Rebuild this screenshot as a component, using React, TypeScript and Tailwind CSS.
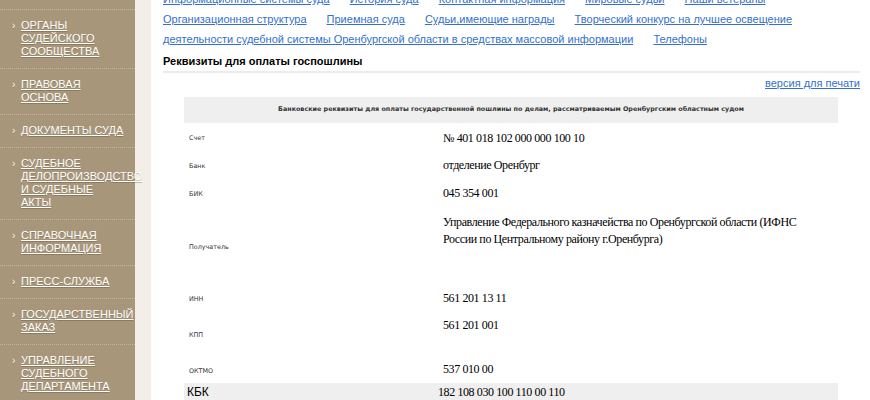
import React from "react"

// Left menu sections
const menu: string[][] = [
  ["ОРГАНЫ", "СУДЕЙСКОГО", "СООБЩЕСТВА"],
  ["ПРАВОВАЯ", "ОСНОВА"],
  ["ДОКУМЕНТЫ СУДА"],
  ["СУДЕБНОЕ", "ДЕЛОПРОИЗВОДСТВО", "И СУДЕБНЫЕ", "АКТЫ"],
  ["СПРАВОЧНАЯ", "ИНФОРМАЦИЯ"],
  ["ПРЕСС-СЛУЖБА"],
  ["ГОСУДАРСТВЕННЫЙ", "ЗАКАЗ"],
  ["УПРАВЛЕНИЕ", "СУДЕБНОГО", "ДЕПАРТАМЕНТА"],
]

const navLinks = [
  "Информационные системы суда",
  "История суда",
  "Контактная информация",
  "Мировые судьи",
  "Наши ветераны",
  "Организационная структура",
  "Приемная суда",
  "Судьи,имеющие награды",
  "Творческий конкурс на лучшее освещение деятельности судебной системы Оренбургской области в средствах массовой информации",
  "Телефоны",
]

interface Row {
  label: string
  value: string
  h: string
  pt: string
}

const rows: Row[] = [
  { label: "Счет", value: "№ 401 018 102 000 000 100 10", h: "h-[28px]", pt: "pt-[7px]" },
  { label: "Банк", value: "отделение Оренбург", h: "h-[28px]", pt: "pt-[6px]" },
  { label: "БИК", value: "045 354 001", h: "h-[28px]", pt: "pt-[6px]" },
  {
    label: "Получатель",
    value:
      "Управление Федерального казначейства по Оренбургской области (ИФНС России по Центральному району г.Оренбурга)",
    h: "h-[78px]",
    pt: "pt-[7px]",
  },
  { label: "ИНН", value: "561 201 13 11", h: "h-[26px]", pt: "pt-[5px]" },
  { label: "КПП", value: "561 201 001", h: "h-[46px]", pt: "pt-[6px]" },
  { label: "ОКТМО", value: "537 010 00", h: "h-[26px]", pt: "pt-[4px]" },
]

function Sidebar() {
  return (
    <aside className="relative z-10 w-[135px] shrink-0 bg-[#a8967a] pt-[9px] font-['Liberation_Sans',Arial,sans-serif]">
      {menu.map((lines, i) => (
        <div
          key={i}
          className="flex border-t border-dotted border-[#c3b59f] pl-[12px] pt-[9px] pb-[10px] text-[11px] leading-[13px] text-white [text-shadow:0_1px_0_rgba(80,60,40,0.3)]"
        >
          <span className="w-[9px] shrink-0 text-[10px]">›</span>
          <a href="#" className="whitespace-nowrap underline underline-offset-[1px]">
            {lines.map((l, j) => (
              <div key={j}>{l}</div>
            ))}
          </a>
        </div>
      ))}
    </aside>
  )
}

function Requisites() {
  return (
    <table className="ml-[21px] mt-[4px] w-[654px] border-collapse">
      <tbody>
        <tr className="h-[26px] bg-[#efefef]">
          <td
            colSpan={2}
            className="text-center align-middle font-['DejaVu_Sans',Verdana,sans-serif] text-[6.4px] font-bold text-[#333]"
          >
            Банковские реквизиты для оплаты государственной пошлины по делам, рассматриваемым Оренбургским областным судом
          </td>
        </tr>
        {rows.map((r) => (
          <tr key={r.label} className={r.h}>
            <td className="w-[254px] pl-[5px] pt-[4px] align-middle font-['DejaVu_Sans',Verdana,sans-serif] text-[6.4px] text-[#333]">
              {r.label}
            </td>
            <td
              className={`${r.pt} pl-[5px] pr-[25px] align-top font-['Liberation_Serif','Times_New_Roman',serif] text-[12px] leading-[17px] tracking-[-0.4px] text-black`}
            >
              {r.value}
            </td>
          </tr>
        ))}
        <tr className="h-[18px] bg-[#efefef]">
          <td className="pl-[3px] align-middle font-['Liberation_Sans',Arial,sans-serif] text-[12px] font-medium text-black">
            КБК
          </td>
          <td className="align-middle font-['Liberation_Serif','Times_New_Roman',serif] text-[12px] tracking-[-0.4px] text-black">
            182 108 030 100 110 00 110
          </td>
        </tr>
      </tbody>
    </table>
  )
}

export default function App() {
  return (
    <div className="flex h-[400px] w-[870px] overflow-hidden bg-white">
      <Sidebar />
      <div className="w-[16px] shrink-0 bg-[#f3eee7]" />

      <main className="min-w-0 flex-1 pl-[12px] pr-[10px] font-['Liberation_Sans',Arial,sans-serif]">
        {/* section links */}
        <nav className="-mt-[11px] text-[11px] leading-[20px] text-[#3470cc]">
          {navLinks.map((l) => (
            <React.Fragment key={l}>
              <a href="#" className="mr-[17px] underline">
                {l}
              </a>{" "}
            </React.Fragment>
          ))}
        </nav>

        <h2 className="mt-[2px] border-b-2 border-[#ececec] text-[11px] font-bold leading-[20px] text-black">
          Реквизиты для оплаты госпошлины
        </h2>

        <div className="text-right text-[11px] leading-[20px]">
          <a href="#" className="text-[#3470cc] underline">
            версия для печати
          </a>
        </div>

        <Requisites />
      </main>
    </div>
  )
}
